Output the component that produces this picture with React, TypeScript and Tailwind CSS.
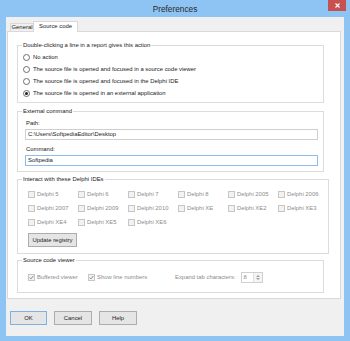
import React from "react";

function Radio({ label, checked }: { label: string; checked?: boolean }) {
  return (
    <div className="flex items-center h-[12px] ml-[1px]">
      <span className="w-[7px] h-[7px] rounded-full border border-[#6e6e6e] bg-white flex items-center justify-center shrink-0">
        {checked && <span className="w-[3px] h-[3px] rounded-full bg-[#1e1e1e]" />}
      </span>
      <span className="ml-[3px] whitespace-nowrap">{label}</span>
    </div>
  );
}

function Check({ label, checked }: { label: string; checked?: boolean }) {
  return (
    <div className="flex items-center h-[14px] text-[#8c8c8c] whitespace-nowrap">
      <span className="w-[7px] h-[7px] border border-[#c6c6c6] bg-[#f2f2f2] shrink-0 flex items-center justify-center">
        {checked && (
          <svg width="5" height="5" viewBox="0 0 5 5">
            <path d="M0.6 2.6 L1.9 3.9 L4.4 0.9" fill="none" stroke="#8a8a8a" strokeWidth="1" />
          </svg>
        )}
      </span>
      <span className="ml-[2px]">{label}</span>
    </div>
  );
}

const ides = [
  "Delphi 5", "Delphi 6", "Delphi 7", "Delphi 8", "Delphi 2005", "Delphi 2006",
  "Delphi 2007", "Delphi 2009", "Delphi 2010", "Delphi XE", "Delphi XE2", "Delphi XE3",
  "Delphi XE4", "Delphi XE5", "Delphi XE6",
];

export default function App() {
  const group = "border border-[#dcdcdc] pl-[4px]";
  const legend = "px-[1px] leading-[7px]";
  const btn = "h-[14px] bg-[#e5e5e5] border flex items-center justify-center text-[#1b1b1b]";

  return (
    <div className="w-[350px] h-[341px] bg-[#8ec4f3] flex flex-col overflow-hidden font-['Liberation_Sans',Arial,sans-serif] text-[5.9px] leading-[7px] text-[#1b1b1b]">
      {/* title bar */}
      <div className="h-[17px] shrink-0 relative flex items-center justify-center">
        <span className="text-[8.3px] leading-none text-[#2a2a2a] mt-[1px]">Preferences</span>
        <div className="absolute right-[4px] top-0 w-[18px] h-[11px] bg-[#c75050] flex items-center justify-center">
          <svg width="5" height="5" viewBox="0 0 5 5">
            <path d="M0.5 0.5 L4.5 4.5 M4.5 0.5 L0.5 4.5" stroke="#fff" strokeWidth="1.1" />
          </svg>
        </div>
      </div>

      {/* client */}
      <div className="flex-1 ml-[6px] mr-[6px] mb-[5px] bg-[#f0f0f0] flex flex-col pl-[1px] pr-[3px]">
        <div className="h-[14px] flex items-end pl-[3px] shrink-0">
          <div className="w-[24px] h-[8px] border border-b-0 border-[#d9d9d9] bg-[#f0f0f0] flex items-center justify-center">
            General
          </div>
          <div className="w-[45px] h-[11px] -ml-[1px] -mb-[1px] relative z-10 bg-white border border-b-0 border-[#d9d9d9] flex items-center justify-center pb-[1px]">
            Source code
          </div>
        </div>

        <div className="h-[268px] shrink-0 bg-white border border-[#d9d9d9] pl-[9px] pr-[16px] pt-[10px] flex flex-col">
          <fieldset className={`${group} h-[61px] pt-[2px]`}>
            <legend className={legend}>Double-clicking a line in a report gives this action</legend>
            <Radio label="No action" />
            <Radio label="The source file is opened and focused in a source code viewer" />
            <Radio label="The source file is opened and focused in the Delphi IDE" />
            <Radio label="The source file is opened in an external application" checked />
          </fieldset>

          <fieldset className={`${group} h-[64px] mt-[5px] pt-[5px]`}>
            <legend className={legend}>External command</legend>
            <div className="ml-[4px]">Path:</div>
            <div className="ml-[3px] mt-[2px] w-[293px] h-[11px] border border-[#cfcfcf] bg-white flex items-center pl-[2px]">
              {"C:\\Users\\SoftpediaEditor\\Desktop"}
            </div>
            <div className="ml-[4px] mt-[6px]">Command:</div>
            <div className="ml-[3px] mt-[2px] w-[293px] h-[11px] border border-[#8cbdec] bg-white flex items-center pl-[2px]">
              Softpedia
            </div>
          </fieldset>

          <fieldset className={`${group} h-[78px] mt-[4px] pt-[4px]`}>
            <legend className={legend}>Interact with these Delphi IDEs</legend>
            <div className="ml-[6px] grid grid-cols-[repeat(6,50px)]">
              {ides.map((d) => (
                <Check key={d} label={d} />
              ))}
            </div>
            <div className={`${btn} ml-[6px] mt-[4px] w-[49px] border-[#adadad]`}>Update registry</div>
          </fieldset>

          <fieldset className={`${group} h-[36px] mt-[3px] pt-[8px]`}>
            <legend className={legend}>Source code viewer</legend>
            <div className="ml-[6px] flex items-center h-[11px] text-[#8c8c8c]">
              <div className="w-[60px]">
                <Check label="Buffered viewer" checked />
              </div>
              <div className="w-[87px]">
                <Check label="Show line numbers" checked />
              </div>
              <span className="whitespace-nowrap">Expand tab characters:</span>
              <div className="ml-[5px] w-[22px] h-[11px] border border-[#d0d0d0] bg-white flex">
                <span className="flex-1 pl-[2px] flex items-center">8</span>
                <div className="w-[9px] border-l border-[#e0e0e0] bg-[#f4f4f4] flex flex-col items-center justify-center gap-[1px]">
                  <svg width="4" height="2" viewBox="0 0 4 2"><path d="M0 2 L2 0 L4 2 Z" fill="#a0a0a0" /></svg>
                  <svg width="4" height="2" viewBox="0 0 4 2"><path d="M0 0 L2 2 L4 0 Z" fill="#a0a0a0" /></svg>
                </div>
              </div>
            </div>
          </fieldset>
        </div>

        <div className="mt-[12px] flex gap-[7px] pl-[3px]">
          <div className={`${btn} w-[37px] border-[#7fb1e2]`}>OK</div>
          <div className={`${btn} w-[38px] border-[#adadad]`}>Cancel</div>
          <div className={`${btn} w-[38px] border-[#adadad]`}>Help</div>
        </div>
      </div>
    </div>
  );
}
